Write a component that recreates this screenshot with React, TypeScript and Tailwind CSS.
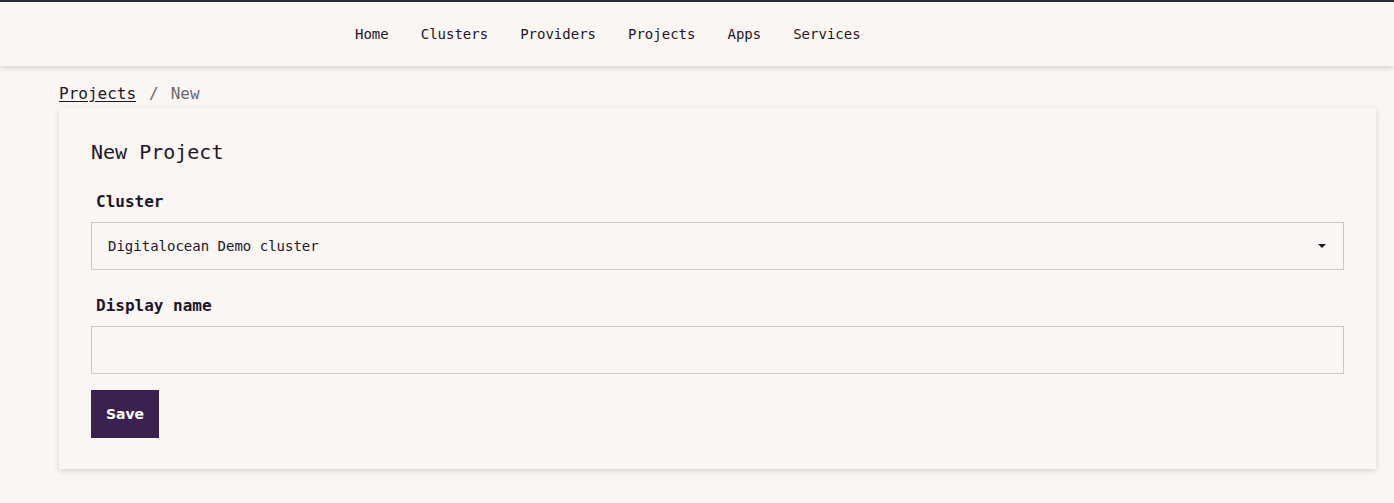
import React from 'react';

const navItems = ['Home', 'Clusters', 'Providers', 'Projects', 'Apps', 'Services'];

export default function App() {
  return (
    <div className="min-h-[503px] bg-[#f9f6f3] text-[#1e1528] font-['DejaVu_Sans_Mono',monospace]">
      <header className="h-[66px] border-t-2 border-[#2b2d3a] bg-[#f9f6f3] shadow-[0_2px_6px_rgba(0,0,0,0.15)] relative">
        <nav className="flex items-center h-full pl-[355px] gap-8 text-sm">
          {navItems.map((item) => (
            <a key={item} href="#" className="text-[#1e1528]">
              {item}
            </a>
          ))}
        </nav>
      </header>

      <div className="px-[59px] pb-8">
        <div className="pt-4 h-[42px] text-base">
          <a href="#" className="underline underline-offset-2">Projects</a>
          <span className="text-[#6b6670] ml-[13px]">/</span>
          <span className="text-[#6b6670] ml-[12px]">New</span>
        </div>

        <div className="w-[1317px] bg-[#f9f6f3] shadow-[0_2px_6px_rgba(0,0,0,0.14)] px-8 pt-7 pb-[31px]">
          <h1 className="text-xl leading-[32px] mb-6">New Project</h1>

          <label className="block pl-[5px] font-bold text-base leading-5 mb-[10px]">Cluster</label>
          <div className="relative h-[48px] border border-[#ccc6c8] flex items-center pl-4 pr-4 text-sm">
            <span>Digitalocean Demo cluster</span>
            <span className="absolute right-[17px] top-[21px] w-0 h-0 border-l-4 border-r-4 border-t-4 border-l-transparent border-r-transparent border-t-[#1e1528]" />
          </div>

          <label className="block pl-[5px] font-bold text-base leading-5 mt-[26px] mb-[10px]">Display name</label>
          <input className="block w-full h-[48px] border border-[#ccc6c8] bg-transparent outline-none px-4 text-sm" />

          <button className="mt-4 h-[48px] w-[68px] bg-[#3a2150] text-white text-sm font-bold font-['DejaVu_Sans',sans-serif]">
            Save
          </button>
        </div>
      </div>
    </div>
  );
}
